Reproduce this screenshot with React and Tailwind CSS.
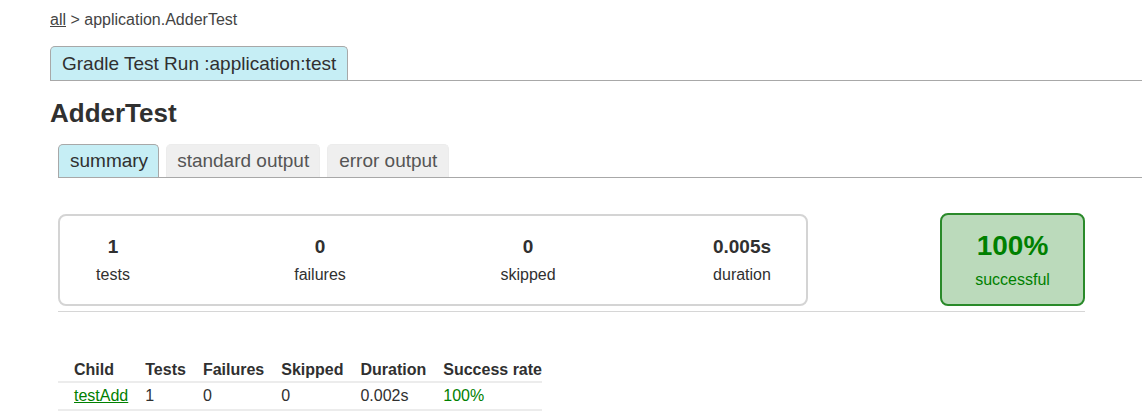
import React from "react";

const stats = [
  { value: "1", label: "tests", gap: "ml-[13px]" },
  { value: "0", label: "failures", gap: "ml-[127px]" },
  { value: "0", label: "skipped", gap: "ml-[128px]" },
  { value: "0.005s", label: "duration", gap: "ml-[134px]" },
];

const columns = ["Child", "Tests", "Failures", "Skipped", "Duration", "Success rate"];

const rows = [
  { name: "testAdd", tests: "1", failures: "0", skipped: "0", duration: "0.002s", rate: "100%" },
];

export default function App() {
  return (
    <div
      className="min-h-[420px] bg-white pl-[50px] pt-[10px] text-[#303030]"
      style={{ fontFamily: '"Liberation Sans", Arial, sans-serif' }}
    >
      {/* breadcrumbs */}
      <div className="text-[16px] leading-[20px] text-[#444]">
        <a href="#" className="underline">all</a> &gt; application.AdderTest
      </div>

      {/* run tab */}
      <div className="mt-[16px] flex border-b border-[#a8a8a8]">
        <div className="rounded-t-[5px] border border-b-0 border-[#a8a8a8] bg-[#c6eef5] px-[11px] pt-[5px] pb-[5px] text-[19px] leading-[23px] text-[#303030]">
          Gradle Test Run :application:test
        </div>
      </div>

      <h1 className="mt-[18px] text-[26px] font-bold leading-[28px] text-[#303030]">AdderTest</h1>

      {/* tabs */}
      <div className="ml-[8px] mt-[17px] flex gap-[7px] border-b border-[#a8a8a8]">
        <div className="rounded-t-[5px] border border-b-0 border-[#a8a8a8] bg-[#c6eef5] pl-[11px] pr-[10px] py-[4px] text-[19px] leading-[24px] text-[#303030]">
          summary
        </div>
        <div className="rounded-t-[5px] border border-b-0 border-[#ececec] bg-[#efefef] px-[10px] py-[4px] text-[19px] leading-[24px] text-[#555]">
          standard output
        </div>
        <div className="rounded-t-[5px] border border-b-0 border-[#ececec] bg-[#efefef] px-[11px] py-[4px] text-[19px] leading-[24px] text-[#555]">
          error output
        </div>
      </div>

      {/* summary */}
      <div className="ml-[8px] mt-[35px] w-[1027px] border-b border-[#d6d6d6] pb-[5px]">
        <div className="flex items-start justify-between">
          <div className="mt-[1px] flex h-[92px] w-[750px] items-center rounded-[8px] border-2 border-[#d4d4d4]">
            {stats.map((s, i) => (
              <div key={i} className={`flex w-[80px] flex-col items-center ${s.gap}`}>
                <div className="text-[19px] font-bold leading-[22px] text-[#303030]">{s.value}</div>
                <div className="mt-[7px] text-[16px] leading-[20px] text-[#303030]">{s.label}</div>
              </div>
            ))}
          </div>
          <div className="flex h-[93px] w-[145px] flex-col items-center justify-center rounded-[8px] border-2 border-[#2a8a2a] bg-[#bbdabb] text-[#008000]">
            <div className="text-[28px] font-bold leading-[32px]">100%</div>
            <div className="mt-[8px] text-[16px] leading-[20px]">successful</div>
          </div>
        </div>
      </div>

      {/* children table */}
      <table className="ml-[8px] mt-[48px] border-collapse text-[16px]">
        <thead>
          <tr className="border-b-2 border-[#ececec]">
            {columns.map((c, i) => (
              <th
                key={c}
                className={`pb-[1px] text-left font-bold leading-[20px] text-[#303030] ${i === 0 ? "pl-[16px] pr-[17px]" : i === 5 ? "pr-0" : "pr-[17px]"}`}
              >
                {c}
              </th>
            ))}
          </tr>
        </thead>
        <tbody>
          {rows.map((r) => (
            <tr key={r.name} className="border-b-2 border-[#ececec] leading-[20px]">
              <td className="pl-[16px] pr-[17px] py-[3px]">
                <a href="#" className="text-[#008000] underline">{r.name}</a>
              </td>
              <td className="pr-[17px] py-[3px]">{r.tests}</td>
              <td className="pr-[17px] py-[3px]">{r.failures}</td>
              <td className="pr-[17px] py-[3px]">{r.skipped}</td>
              <td className="pr-[17px] py-[3px]">{r.duration}</td>
              <td className="py-[3px] text-[#008000]">{r.rate}</td>
            </tr>
          ))}
        </tbody>
      </table>
    </div>
  );
}
